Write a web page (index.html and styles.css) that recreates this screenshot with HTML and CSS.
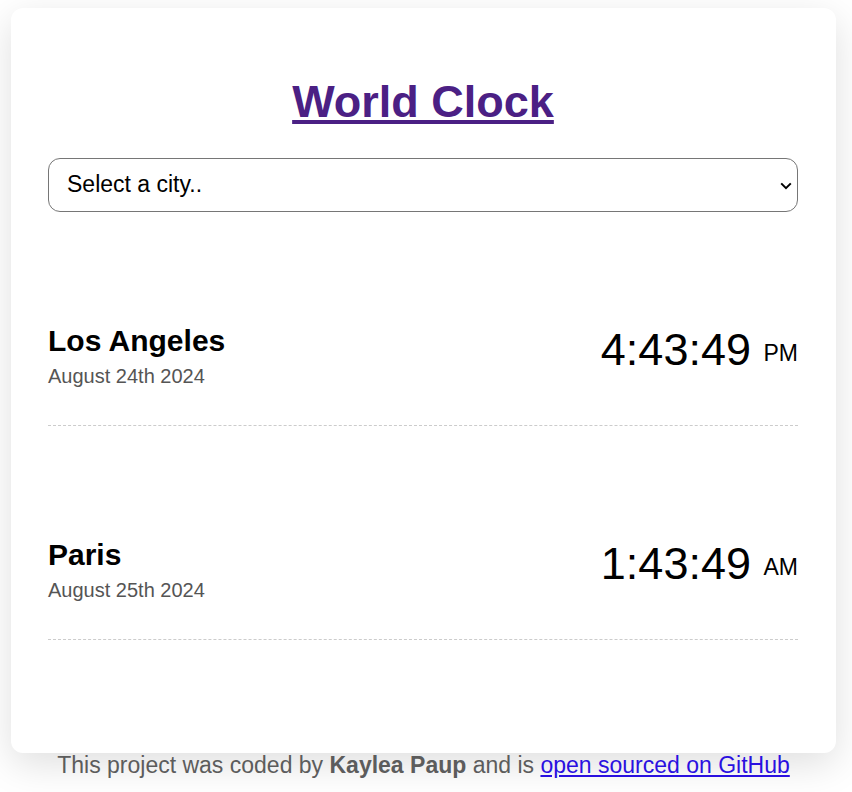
FILE: index.html
```html
<!DOCTYPE html>
<html lang="en">
<head>
<meta charset="utf-8">
<meta name="viewport" content="width=device-width, initial-scale=1">
<title>World Clock</title>
<link rel="stylesheet" href="styles.css">
</head>
<body>
<main class="container">
  <h1><a href="#">World Clock</a></h1>
  <div class="select-wrap">
    <select class="city-select" aria-label="City">
      <option>Select a city..</option>
      <option>Los Angeles</option>
      <option>Paris</option>
    </select>
    <svg class="chevron" viewBox="0 0 12 8" aria-hidden="true"><path d="M1.2 1.4 6 6.2l4.8-4.8" fill="none" stroke="#000" stroke-width="2"/></svg>
  </div>
  <section class="cities">
    <div class="city">
      <div>
        <h2>Los Angeles</h2>
        <div class="date">August 24th 2024</div>
      </div>
      <div class="time">4:43:49 <small>PM</small></div>
    </div>
    <div class="city">
      <div>
        <h2>Paris</h2>
        <div class="date">August 25th 2024</div>
      </div>
      <div class="time">1:43:49 <small>AM</small></div>
    </div>
  </section>
</main>
<footer>This project was coded by <strong>Kaylea Paup</strong> and is <a href="#">open sourced on GitHub</a></footer>
</body>
</html>
```

FILE: styles.css
```css
* {
  box-sizing: border-box;
}

body {
  min-height: 100vh;
  margin: 0;
  padding: 8px 16px 0 11px;
  background: #fff;
  color: #000;
  font-family: "Liberation Sans", Arial, sans-serif;
}

.container {
  padding: 64px 38px 113px 37px;
  border-radius: 12px;
  background: #fff;
  box-shadow: 0 11px 38px rgba(0, 0, 0, 0.13);
}

h1 {
  margin: 0 0 27px;
  font-size: 45px;
  line-height: 59px;
  text-align: center;
}

h1 a {
  color: #4b2084;
}

.select-wrap {
  position: relative;
}

.city-select {
  display: block;
  width: 100%;
  height: 54px;
  padding: 0 24px 2px 18px;
  border: 1px solid #767676;
  border-radius: 12px;
  appearance: none;
  background: #fff;
  color: #000;
  font-family: inherit;
  font-size: 23px;
}

.chevron {
  position: absolute;
  top: 24px;
  right: 6px;
  width: 12px;
  height: 8px;
  pointer-events: none;
}

.city {
  display: flex;
  align-items: flex-start;
  justify-content: space-between;
  padding: 112px 0 34px;
  border-bottom: 1px dashed #ccc;
}

h2 {
  margin: 0;
  font-size: 30px;
  line-height: 34px;
}

.date {
  margin-top: 3px;
  font-size: 20px;
  line-height: 30px;
  color: #555;
}

.time {
  font-size: 45px;
  line-height: 52px;
}

.time small {
  font-size: 23px;
  line-height: 26px;
  vertical-align: middle;
}

footer {
  position: relative;
  font-size: 23px;
  line-height: 24px;
  text-align: center;
  color: #5c5c5c;
}

footer a {
  color: #2a10e0;
}
```
